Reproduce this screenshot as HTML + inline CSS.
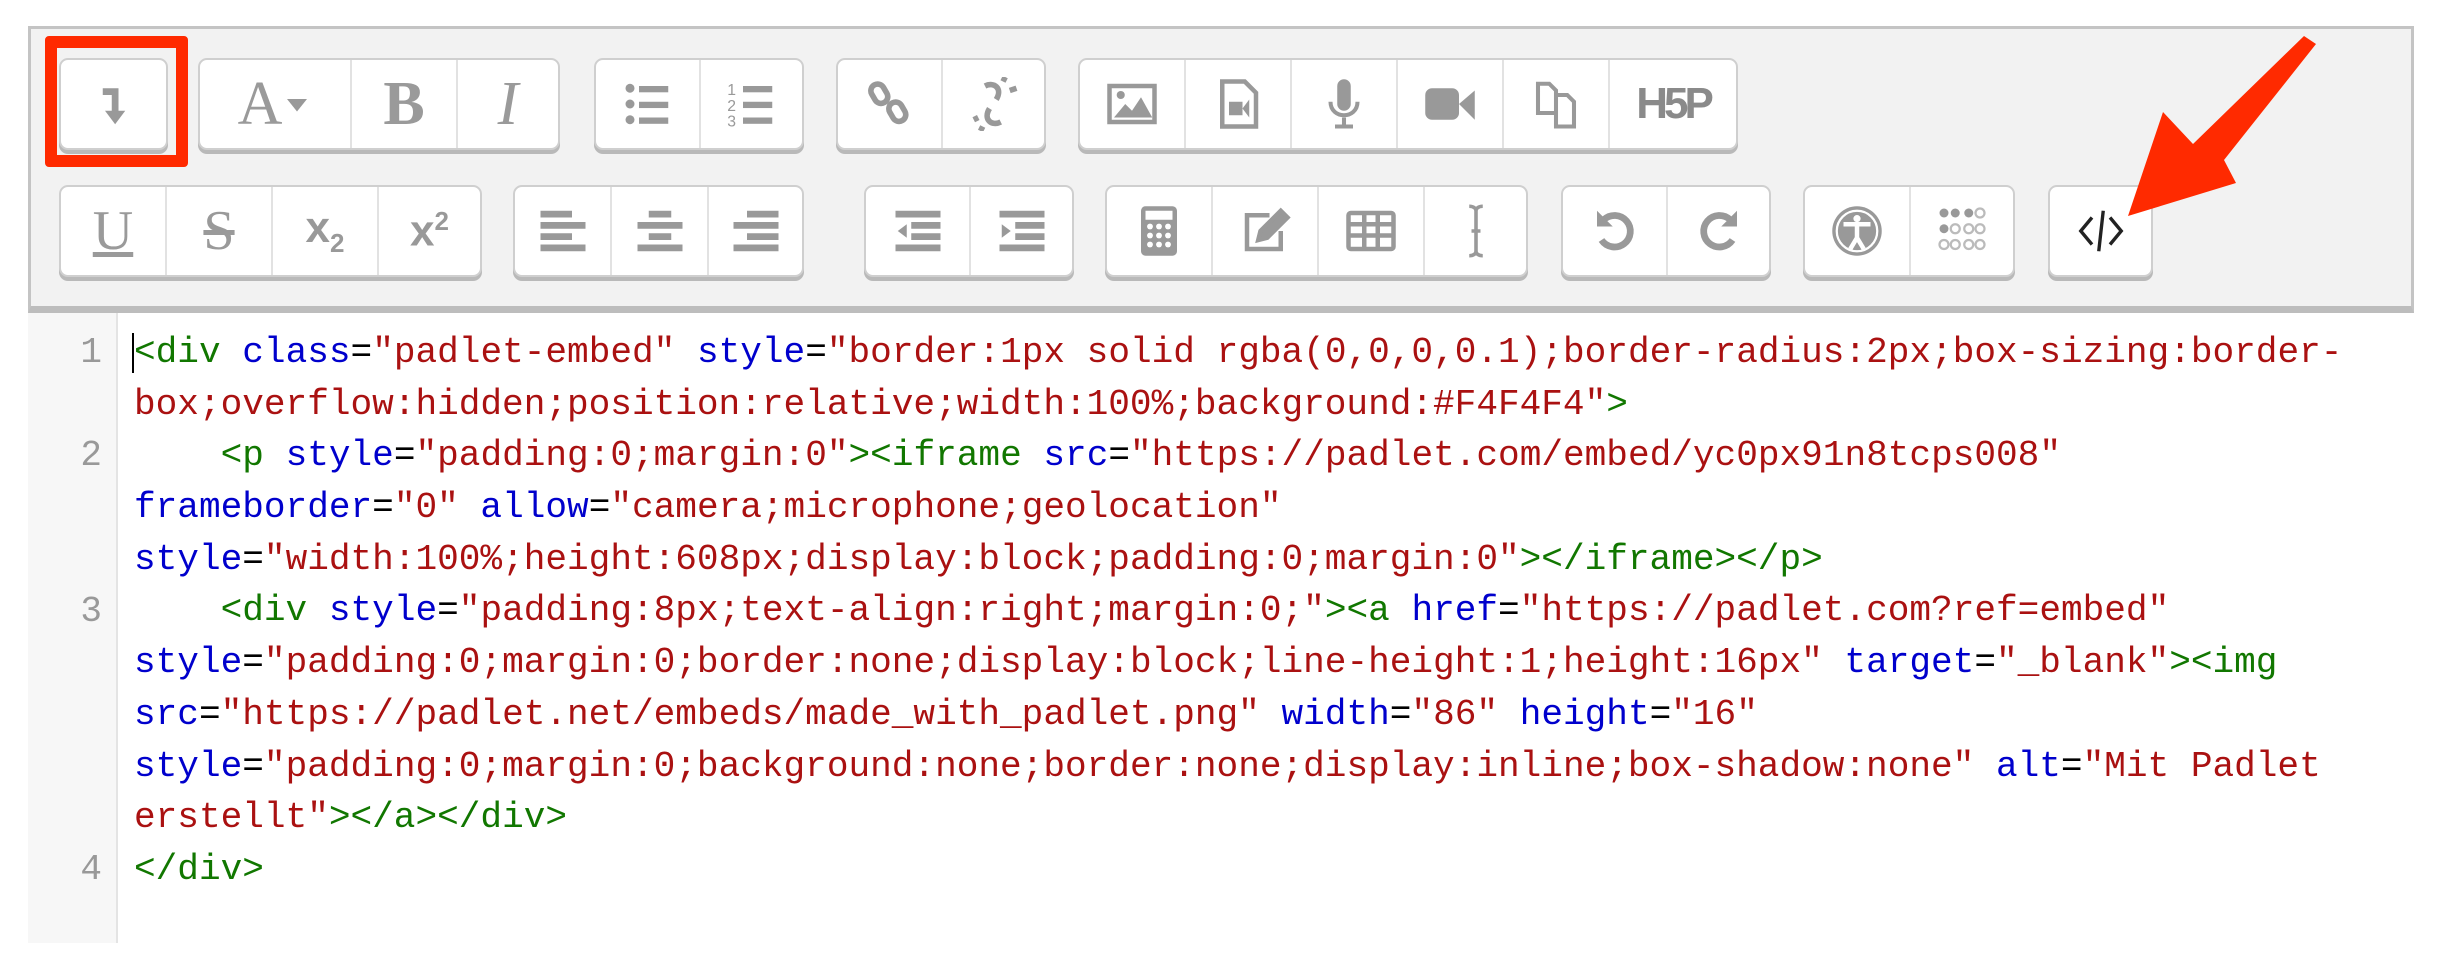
<!DOCTYPE html>
<html><head><meta charset="utf-8"><style>
*{margin:0;padding:0;box-sizing:border-box}
body{width:2440px;height:976px;background:#fff;position:relative;overflow:hidden;font-family:"Liberation Sans",sans-serif}
.tb{position:absolute;left:28px;top:26px;width:2386px;height:287px;background:#f2f2f2;border:3px solid #c4c4c4;border-bottom:7px solid #bdbdbd}
.g{position:absolute;display:flex;background:#fff;border:2px solid #cfcfcf;border-radius:9px;box-shadow:0 4px 0 #b9b9b9;height:92px;overflow:hidden}
.g>div{height:100%;display:flex;align-items:center;justify-content:center;border-right:2px solid #e2e2e2;color:#999}
.g>div:last-child{border-right:none}
.g svg{width:54px;height:54px}
.ser{font-family:"Liberation Serif",serif;font-size:62px;color:#9a9a9a}
.gut{position:absolute;left:28px;top:313px;width:90px;height:630px;background:#f7f7f7;border-right:2px solid #e4e4e4}
.code{position:absolute;left:134px;top:327px;font-family:"Liberation Mono",monospace;font-size:36.1px;color:#000}
.code div{height:51.7px;line-height:51.7px;white-space:pre}
.ln{position:absolute;left:28px;width:74px;text-align:right;font-family:"Liberation Mono",monospace;font-size:36px;color:#999;line-height:51.7px}
.t{color:#170}.a{color:#00c}.s{color:#a11}
</style></head><body>
<div class="tb"></div>
<div style="position:absolute;left:45px;top:36px;width:143px;height:131px;border:12px solid #ff2a00;border-radius:4px"></div>
<!-- Row 1 -->
<div class="g" style="left:59px;top:58px;width:109px"><div style="width:109px"><svg viewBox="0 0 24 24" fill="#999"><path d="M7 5h7v10h3l-4.5 6-4.5-6h3V8H7z"/></svg></div></div>
<div class="g" style="left:198px;top:58px;width:362px"><div style="width:152px"><span class="ser">A</span><svg viewBox="0 0 24 24" style="width:30px" fill="#999"><path d="M4 8h16l-8 10z"/></svg></div><div style="width:106px"><span class="ser" style="font-weight:bold">B</span></div><div style="flex:1"><span class="ser" style="font-style:italic">I</span></div></div>
<div class="g" style="left:594px;top:58px;width:210px"><div style="width:105px"><svg viewBox="0 0 24 24" fill="#999"><circle cx="4" cy="5" r="2"/><circle cx="4" cy="12" r="2"/><circle cx="4" cy="19" r="2"/><rect x="8" y="4" width="13" height="2.8"/><rect x="8" y="11" width="13" height="2.8"/><rect x="8" y="18" width="13" height="2.8"/></svg></div><div style="flex:1"><svg viewBox="0 0 24 24" fill="#999"><text x="1" y="8" font-size="7" font-family="Liberation Sans">1</text><text x="1" y="15" font-size="7" font-family="Liberation Sans">2</text><text x="1" y="22" font-size="7" font-family="Liberation Sans">3</text><rect x="8" y="4" width="13" height="2.8"/><rect x="8" y="11" width="13" height="2.8"/><rect x="8" y="18" width="13" height="2.8"/></svg></div></div>
<div class="g" style="left:836px;top:58px;width:210px"><div style="width:105px"><svg viewBox="0 0 24 24" fill="none" stroke="#999" stroke-width="2.5"><rect x="4" y="3" width="6" height="9" rx="3" transform="rotate(-30 7 7)"/><rect x="12" y="11" width="6" height="9" rx="3" transform="rotate(-30 15 15)"/></svg></div><div style="flex:1"><svg viewBox="0 0 24 24" fill="none" stroke="#999" stroke-width="2.5"><path d="M8 4c4-2 8 1 5 6M15 20c-4 2-8-1-5-6M16 2l1-2M19 6l3-1M5 18l-2 1M7 22l-1 2"/></svg></div></div>
<div class="g" style="left:1078px;top:58px;width:660px"><div style="width:106px"><svg viewBox="0 0 24 24" fill="#999"><path d="M2 4h20v16H2z" fill="none" stroke="#999" stroke-width="2"/><circle cx="7" cy="8" r="1.8"/><path d="M4 18l5-6 3 3 4-6 5 9z"/></svg></div><div style="width:106px"><svg viewBox="0 0 24 24" fill="#999"><path d="M5 2h10l5 5v15H5z" fill="none" stroke="#999" stroke-width="2"/><rect x="8" y="11" width="6" height="6"/><path d="M17 10v8l-3-4z"/></svg></div><div style="width:106px"><svg viewBox="0 0 24 24" fill="#999"><rect x="9" y="1" width="6" height="14" rx="3"/><path d="M6 11c0 8 12 8 12 0M12 18v4M8 22h8" fill="none" stroke="#999" stroke-width="1.8"/></svg></div><div style="width:106px"><svg viewBox="0 0 24 24" fill="#999"><rect x="1" y="5" width="15" height="14" rx="3"/><path d="M16 12l7-6v13z"/></svg></div><div style="width:106px"><svg viewBox="0 0 24 24" fill="none" stroke="#999" stroke-width="1.8"><path d="M4 3h5l3 3v10H4zM12 8h5l3 3v11h-8z"/></svg></div><div style="flex:1"><span style="font-weight:bold;font-size:44px;color:#8a8a8a;letter-spacing:-4px">H5P</span></div></div>
<!-- Row 2 -->
<div class="g" style="left:59px;top:185px;width:423px"><div style="width:106px"><span class="ser" style="text-decoration:underline;font-size:56px">U</span></div><div style="width:106px"><span class="ser" style="text-decoration:line-through;font-size:56px">S</span></div><div style="width:106px"><span style="font-size:44px;color:#999;font-weight:bold">x<sub style="font-size:26px">2</sub></span></div><div style="flex:1"><span style="font-size:44px;color:#999;font-weight:bold">x<sup style="font-size:26px">2</sup></span></div></div>
<div class="g" style="left:513px;top:185px;width:291px"><div style="width:97px"><svg viewBox="0 0 24 24" fill="#999"><rect x="2" y="3" width="14" height="3"/><rect x="2" y="8" width="20" height="3"/><rect x="2" y="13" width="14" height="3"/><rect x="2" y="18" width="20" height="3"/></svg></div><div style="width:97px"><svg viewBox="0 0 24 24" fill="#999"><rect x="7" y="3" width="10" height="3"/><rect x="2" y="8" width="20" height="3"/><rect x="7" y="13" width="10" height="3"/><rect x="2" y="18" width="20" height="3"/></svg></div><div style="flex:1"><svg viewBox="0 0 24 24" fill="#999"><rect x="8" y="3" width="14" height="3"/><rect x="2" y="8" width="20" height="3"/><rect x="8" y="13" width="14" height="3"/><rect x="2" y="18" width="20" height="3"/></svg></div></div>
<div class="g" style="left:864px;top:185px;width:210px"><div style="width:105px"><svg viewBox="0 0 24 24" fill="#999"><rect x="2" y="3" width="20" height="3"/><rect x="9" y="8" width="13" height="3"/><rect x="9" y="13" width="13" height="3"/><rect x="2" y="18" width="20" height="3"/><path d="M7 9v6l-4-3z"/></svg></div><div style="flex:1"><svg viewBox="0 0 24 24" fill="#999"><rect x="2" y="3" width="20" height="3"/><rect x="9" y="8" width="13" height="3"/><rect x="9" y="13" width="13" height="3"/><rect x="2" y="18" width="20" height="3"/><path d="M3 9v6l4-3z"/></svg></div></div>
<div class="g" style="left:1105px;top:185px;width:423px"><div style="width:106px"><svg viewBox="0 0 24 24" fill="#999"><rect x="4" y="1" width="16" height="22" rx="2"/><rect x="6" y="3" width="12" height="4" fill="#fff"/><g fill="#fff"><circle cx="8" cy="10" r="1.3"/><circle cx="12" cy="10" r="1.3"/><circle cx="16" cy="10" r="1.3"/><circle cx="8" cy="14" r="1.3"/><circle cx="12" cy="14" r="1.3"/><circle cx="16" cy="14" r="1.3"/><circle cx="8" cy="18" r="1.3"/><circle cx="12" cy="18" r="1.3"/><circle cx="16" cy="18" r="1.3"/></g></svg></div><div style="width:106px"><svg viewBox="0 0 24 24" fill="none" stroke="#999" stroke-width="2"><path d="M14 5H4v15h15v-8"/><path d="M9 16l1-4 9-9 3 3-9 9z" fill="#999"/></svg></div><div style="width:106px"><svg viewBox="0 0 24 24" fill="none" stroke="#999" stroke-width="2"><rect x="2" y="4" width="20" height="16" rx="1"/><path d="M2 9h20M2 14h20M9 4v16M15 4v16"/></svg></div><div style="flex:1"><svg viewBox="0 0 24 24" fill="none" stroke="#999" stroke-width="1.6"><path d="M9 1c2 0 3 1 3 2v18c0 1-1 2-3 2M15 1c-2 0-3 1-3 2v18c0 1 1 2 3 2M10 12h4"/></svg></div></div>
<div class="g" style="left:1561px;top:185px;width:210px"><div style="width:105px"><svg viewBox="0 0 24 24" fill="none" stroke="#999" stroke-width="3"><path d="M7 7a7 7 0 1 1-1 9"/><path d="M4 3v7h7" fill="#999" stroke="none"/></svg></div><div style="flex:1"><svg viewBox="0 0 24 24" fill="none" stroke="#999" stroke-width="3"><path d="M17 7a7 7 0 1 0 1 9"/><path d="M20 3v7h-7" fill="#999" stroke="none"/></svg></div></div>
<div class="g" style="left:1803px;top:185px;width:212px"><div style="width:106px"><svg viewBox="0 0 24 24"><circle cx="12" cy="12" r="11" fill="#999"/><circle cx="12" cy="12" r="9" fill="none" stroke="#fff" stroke-width="1"/><circle cx="12" cy="6.5" r="1.6" fill="#fff"/><path d="M6 9h12M12 9v6M12 15l-3 5M12 15l3 5" stroke="#fff" stroke-width="2"/></svg></div><div style="flex:1"><svg viewBox="0 0 24 24" fill="#999"><circle cx="4" cy="4" r="2"/><circle cx="9" cy="4" r="2"/><circle cx="4" cy="11" r="2"/><circle cx="15" cy="4" r="2"/><g fill="none" stroke="#bbb" stroke-width="1"><circle cx="20" cy="4" r="2"/><circle cx="9" cy="11" r="2"/><circle cx="15" cy="11" r="2"/><circle cx="20" cy="11" r="2"/><circle cx="4" cy="18" r="2"/><circle cx="9" cy="18" r="2"/><circle cx="15" cy="18" r="2"/><circle cx="20" cy="18" r="2"/></g></svg></div></div>
<div class="g" style="left:2048px;top:185px;width:105px"><div style="width:105px"><svg viewBox="0 0 24 24" fill="none" stroke="#222" stroke-width="1.5"><path d="M8 6l-5 6 5 6M16 6l5 6-5 6M13 3l-2 18"/></svg></div></div>
<svg style="position:absolute;left:0;top:0" width="2440" height="976"><polygon points="2304,36 2316,44 2224,160 2236,183 2128,216 2163,112 2193,144" fill="#ff2a00"/></svg>
<div class="gut"></div>
<div class="ln" style="top:327px">1</div>
<div class="ln" style="top:430.4px">2</div>
<div class="ln" style="top:585.5px">3</div>
<div class="ln" style="top:844px">4</div>
<div style="position:absolute;left:132px;top:333px;width:2px;height:40px;background:#000"></div>
<div class="code"><div><span class="t">&lt;div</span> <span class="a">class</span>=<span class="s">"padlet-embed"</span> <span class="a">style</span>=<span class="s">"border:1px solid rgba(0,0,0,0.1);border-radius:2px;box-sizing:border-</span></div><div><span class="s">box;overflow:hidden;position:relative;width:100%;background:#F4F4F4"</span><span class="t">&gt;</span></div><div>    <span class="t">&lt;p</span> <span class="a">style</span>=<span class="s">"padding:0;margin:0"</span><span class="t">&gt;&lt;iframe</span> <span class="a">src</span>=<span class="s">"https://padlet.com/embed/yc0px91n8tcps008"</span></div><div><span class="a">frameborder</span>=<span class="s">"0"</span> <span class="a">allow</span>=<span class="s">"camera;microphone;geolocation"</span></div><div><span class="a">style</span>=<span class="s">"width:100%;height:608px;display:block;padding:0;margin:0"</span><span class="t">&gt;&lt;/iframe&gt;&lt;/p&gt;</span></div><div>    <span class="t">&lt;div</span> <span class="a">style</span>=<span class="s">"padding:8px;text-align:right;margin:0;"</span><span class="t">&gt;&lt;a</span> <span class="a">href</span>=<span class="s">"https://padlet.com?ref=embed"</span></div><div><span class="a">style</span>=<span class="s">"padding:0;margin:0;border:none;display:block;line-height:1;height:16px"</span> <span class="a">target</span>=<span class="s">"_blank"</span><span class="t">&gt;&lt;img</span></div><div><span class="a">src</span>=<span class="s">"https://padlet.net/embeds/made_with_padlet.png"</span> <span class="a">width</span>=<span class="s">"86"</span> <span class="a">height</span>=<span class="s">"16"</span></div><div><span class="a">style</span>=<span class="s">"padding:0;margin:0;background:none;border:none;display:inline;box-shadow:none"</span> <span class="a">alt</span>=<span class="s">"Mit Padlet</span></div><div><span class="s">erstellt"</span><span class="t">&gt;&lt;/a&gt;&lt;/div&gt;</span></div><div><span class="t">&lt;/div&gt;</span></div></div>
</body></html>
